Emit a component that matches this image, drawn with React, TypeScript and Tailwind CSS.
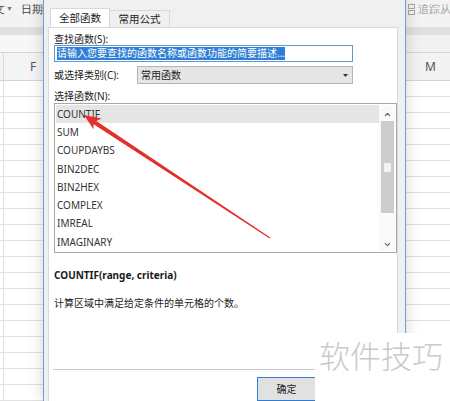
import { ChevronDown, ChevronUp } from 'lucide-react';

const functions = ['COUNTIF', 'SUM', 'COUPDAYBS', 'BIN2DEC', 'BIN2HEX', 'COMPLEX', 'IMREAL', 'IMAGINARY'];
const sheetRows = Array.from({ length: 20 }, (_, i) => i);

const uiFont = { fontFamily: '"Noto Sans", "Noto Sans CJK SC", sans-serif' };

// Left edge of the worksheet, partly hidden by the dialog
function LeftSheet() {
  return (
    <div className="w-[43px] shrink-0 flex flex-col overflow-hidden">
      <div className="h-[29px] bg-[#f3f3f3] flex items-start pt-[1px] text-[11px] text-[#444] whitespace-nowrap overflow-hidden">
        <span className="ml-[-6px]">文</span>
        <span className="text-[7px] ml-[1px] mt-[3px] text-[#777]">▼</span>
        <span className="ml-[8px]">日期和</span>
      </div>
      <div className="h-[9px] bg-[#e0e0e0]" />
      <div className="h-[20px] bg-[#f7f7f7] border-b border-[#d6d6d6]" />
      <div className="h-[30px] bg-[#f4f4f4] border-b border-[#d4d4d4] flex">
        <div className="w-[4px] shrink-0 border-r border-[#dadada]" />
        <div className="w-[58px] shrink-0 flex items-center justify-center text-[12px] text-[#555]">F</div>
      </div>
      {sheetRows.map((r) => (
        <div key={r} className="h-[16px] shrink-0 border-b border-[#e2e2e2] flex">
          <div className="w-[4px] border-r border-[#e2e2e2]" />
        </div>
      ))}
    </div>
  );
}

// Right edge of the worksheet
function RightSheet() {
  return (
    <div className="flex-1 flex flex-col overflow-hidden">
      <div className="h-[29px] bg-[#f3f3f3] flex items-start pt-[1px] text-[11px] text-[#a3a3a3] whitespace-nowrap overflow-hidden">
        <svg width="7" height="11" viewBox="0 0 7 11" className="ml-[2px] mt-[3px] shrink-0">
          <rect x="0.5" y="0.5" width="6" height="4" fill="none" stroke="#a8a8a8" />
          <rect x="0.5" y="6.5" width="6" height="4" fill="none" stroke="#a8a8a8" />
        </svg>
        <span className="ml-[3px]">追踪从属</span>
      </div>
      <div className="h-[9px] bg-[#e0e0e0]" />
      <div className="h-[20px] bg-[#f1f1f1] border-b border-[#d6d6d6]" />
      <div className="h-[30px] bg-[#f2f2f2] border-b border-[#d4d4d4] flex">
        <div className="w-[49px] shrink-0 flex items-center justify-center text-[12px] text-[#555]">M</div>
      </div>
      {sheetRows.map((r) => (
        <div key={r} className="h-[16px] shrink-0 border-b border-[#e2e2e2]" />
      ))}
    </div>
  );
}

function Scrollbar() {
  return (
    <div className="w-[16px] shrink-0 bg-[#fafafa] flex flex-col items-center">
      <ChevronUp className="w-[9px] h-[9px] mt-[5px] text-[#606060]" strokeWidth={3} />
      <div className="mt-[2px] w-[13px] h-[92px] bg-[#cdcdcd] flex flex-col items-center">
        <div className="mt-[42px] w-[7px] h-[9px] bg-[#f2f2f2]" />
      </div>
      <ChevronDown className="w-[9px] h-[9px] mt-[27px] text-[#606060]" strokeWidth={3} />
    </div>
  );
}

function InsertFunctionDialog() {
  return (
    <div
      className="w-[363px] shrink-0 bg-[#f0f0f0] border-l border-r border-[#6f9fd6] flex flex-col shadow-[0_0_14px_rgba(0,0,0,0.18)] z-10"
      style={uiFont}
    >
      {/* tabs */}
      <div className="h-[27px] flex items-end pl-[6px] text-[10.5px] text-[#222]">
        <div className="w-[60px] h-[19px] bg-white border border-b-0 border-[#d9d9d9] flex items-center justify-center pt-px">全部函数</div>
        <div className="w-[60px] h-[17px] bg-[#f0f0f0] border border-l-0 border-b-0 border-[#d9d9d9] flex items-center justify-center pt-px">常用公式</div>
      </div>

      <div className="flex-1 ml-[4px] mr-[7px] bg-white border border-b-0 border-[#d9d9d9] pl-[5px] flex flex-col text-[10px] text-[#222]">
        <div className="mt-[5px] h-[12px] leading-[12px]">查找函数(S):</div>
        <div className="w-[299px] h-[17px] border border-[#5b9bd5] flex items-center px-[2px] shrink-0">
          <span className="bg-[#2f7fd6] text-white leading-[13px] whitespace-nowrap">请输入您要查找的函数名称或函数功能的简要描述...</span>
        </div>

        <div className="mt-[4px] h-[18px] flex items-center shrink-0">
          <div className="w-[83px]">或选择类别(C):</div>
          <div className="w-[216px] h-[18px] bg-[#e5e5e5] border border-[#b4b4b4] flex items-center justify-between pl-[3px] pr-[4px]">
            <span>常用函数</span>
            <svg width="5" height="3" viewBox="0 0 5 3">
              <path d="M0 0h5L2.5 3z" fill="#333" />
            </svg>
          </div>
        </div>

        <div className="mt-[6px] h-[12px] leading-[12px]">选择函数(N):</div>
        <div className="mt-[1px] w-[343px] h-[150px] border border-[#a9a9a9] flex p-px shrink-0">
          <div className="flex-1 flex flex-col">
            {functions.map((name, i) => (
              <div
                key={name}
                className={`h-[18.3px] shrink-0 flex items-center pl-[1px] text-[10px] text-[#333] ${i === 0 ? 'bg-[#e5e5e5]' : ''}`}
              >
                {name}
              </div>
            ))}
          </div>
          <Scrollbar />
        </div>

        <div className="mt-[15px] h-[14px] leading-[14px] font-bold text-[10px] text-[#1a1a1a]">COUNTIF(range, criteria)</div>
        <div className="mt-[14px] h-[14px] leading-[14px]">计算区域中满足给定条件的单元格的个数。</div>

        <div className="mt-[59px] ml-[-1px] w-[345px] h-px bg-[#c9c9c9] shrink-0" />
        <div className="mt-[7px] ml-[203px] w-[65px] h-[24px] bg-[#e1e1e1] border border-[#2e7ed6] flex items-center justify-center text-[10px] pr-[6px]">
          确定
        </div>
      </div>
    </div>
  );
}

export default function App() {
  return (
    <div className="relative w-[450px] h-[401px] overflow-hidden bg-white flex">
      <LeftSheet />
      <InsertFunctionDialog />
      <RightSheet />

      {/* red annotation arrow */}
      <svg className="absolute inset-0 z-20 pointer-events-none" width="450" height="401" viewBox="0 0 450 401">
        <polygon
          points="84,115 101.5,118.5 96.3,120.9 270.3,237.6 269.7,238.4 93.6,124.3 93.5,129.3"
          fill="#e3302a"
        />
      </svg>

      {/* watermark */}
      <div
        className="absolute left-[315px] top-[333px] right-0 bottom-0 bg-white z-30 flex items-start pt-[4px] pl-[4px] text-[31px] leading-[36px] text-[#cacaca]"
        style={{ fontFamily: '"Noto Sans CJK SC", sans-serif', fontWeight: 300 }}
      >
        软件技巧
      </div>
    </div>
  );
}
